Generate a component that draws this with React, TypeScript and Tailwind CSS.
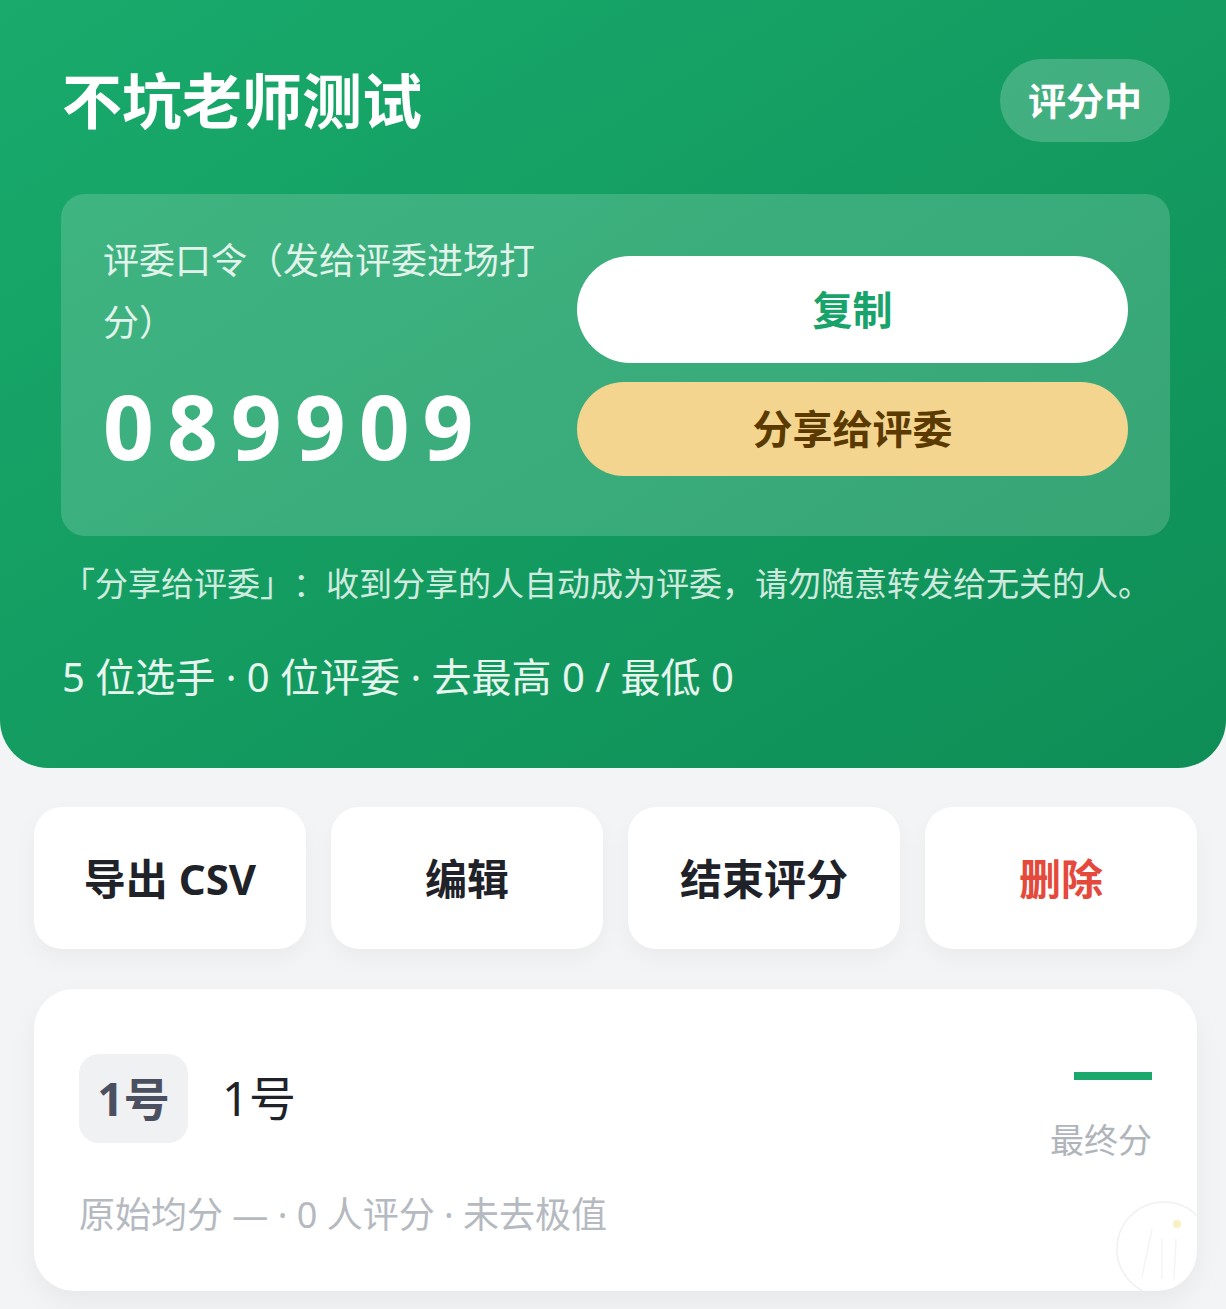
import React from "react";

const FONT = { fontFamily: '"Noto Sans", "Noto Sans CJK SC", sans-serif' };

const actions = [
  { label: "导出 CSV", danger: false },
  { label: "编辑", danger: false },
  { label: "结束评分", danger: false },
  { label: "删除", danger: true },
];

export default function App() {
  return (
    <div className="min-h-[1309px] w-full bg-[#f3f4f6] [text-spacing-trim:space-all]" style={FONT}>
      <header className="rounded-b-[48px] bg-gradient-to-br from-[#19aa6c] to-[#0e8e56] pb-[66px] pl-[62px] pr-[56px] pt-[59px]">
        <div className="flex items-center justify-between">
          <h1 className="text-[60px] font-bold leading-none text-white">不坑老师测试</h1>
          <span className="flex h-[83px] w-[170px] items-center justify-center rounded-full bg-white/20 text-[38px] font-bold text-white">
            评分中
          </span>
        </div>

        <div className="mt-[52px] -ml-px flex h-[342px] items-center justify-between rounded-[24px] bg-white/[0.17] pl-[42px] pr-[42px]">
          <div className="w-[450px] self-start pt-[36px]">
            <p className="text-[36px] leading-[62px] text-white/85">评委口令（发给评委进场打分）</p>
            <p className="mt-[27px] text-[89px] font-bold leading-none tracking-[13px] text-white">089909</p>
          </div>
          <div className="flex w-[551px] flex-col gap-[19px] pt-[2px]">
            <button className="h-[107px] rounded-full bg-white text-[40px] font-bold text-[#18a36a]">复制</button>
            <button className="h-[94px] rounded-full bg-[#f3d58f] text-[40px] font-bold text-[#5a3a00]">分享给评委</button>
          </div>
        </div>

        <p className="mt-[26px] whitespace-nowrap text-[33px] leading-[44px] text-white/80">
          「分享给评委」：收到分享的人自动成为评委，请勿随意转发给无关的人。
        </p>
        <p className="mt-[46px] text-[40px] leading-[50px] text-white/90">5 位选手 · 0 位评委 · 去最高 0 / 最低 0</p>
      </header>

      <div className="mt-[39px] grid grid-cols-4 gap-[25px] pl-[34px] pr-[29px]">
        {actions.map((a) => (
          <button
            key={a.label}
            className={`h-[142px] rounded-[28px] bg-white text-[42px] font-bold shadow-[0_10px_24px_rgba(0,0,0,0.04)] ${
              a.danger ? "text-[#e5493b]" : "text-[#1f2228]"
            }`}
          >
            {a.label}
          </button>
        ))}
      </div>

      <div className="relative ml-[34px] mr-[29px] mt-[40px] h-[302px] overflow-hidden rounded-[40px] bg-white px-[45px] pt-[65px] shadow-[0_12px_28px_rgba(0,0,0,0.05)]">
        <div className="flex items-start justify-between">
          <div className="flex items-center gap-[34px]">
            <span className="flex h-[89px] w-[109px] items-center justify-center rounded-[20px] bg-[#f0f1f3] text-[46px] font-bold text-[#4b5060]">
              1号
            </span>
            <span className="text-[47px] text-[#1f2228]">1号</span>
          </div>
          <div className="flex flex-col items-end pt-[18px]">
            <span className="h-[8px] w-[78px] bg-[#1aa86c]" />
            <span className="mt-[43px] text-[34px] leading-none text-[#b0b4bb]">最终分</span>
          </div>
        </div>
        <p className="mt-[40px] text-[36px] leading-none text-[#b5b9c0]">原始均分 — · 0 人评分 · 未去极值</p>

        <svg className="absolute bottom-[-8px] right-[-17px] h-[100px] w-[100px]" viewBox="0 0 100 100">
          <circle cx="50" cy="50" r="47" fill="none" stroke="#eef0f2" strokeWidth="1.5" />
          <path d="M28 78 L38 30 M48 80 L48 40 M60 80 L62 40" stroke="#f3f4f6" strokeWidth="1.5" fill="none" />
          <circle cx="63" cy="25" r="4" fill="#fbeec0" />
        </svg>
      </div>
    </div>
  );
}
